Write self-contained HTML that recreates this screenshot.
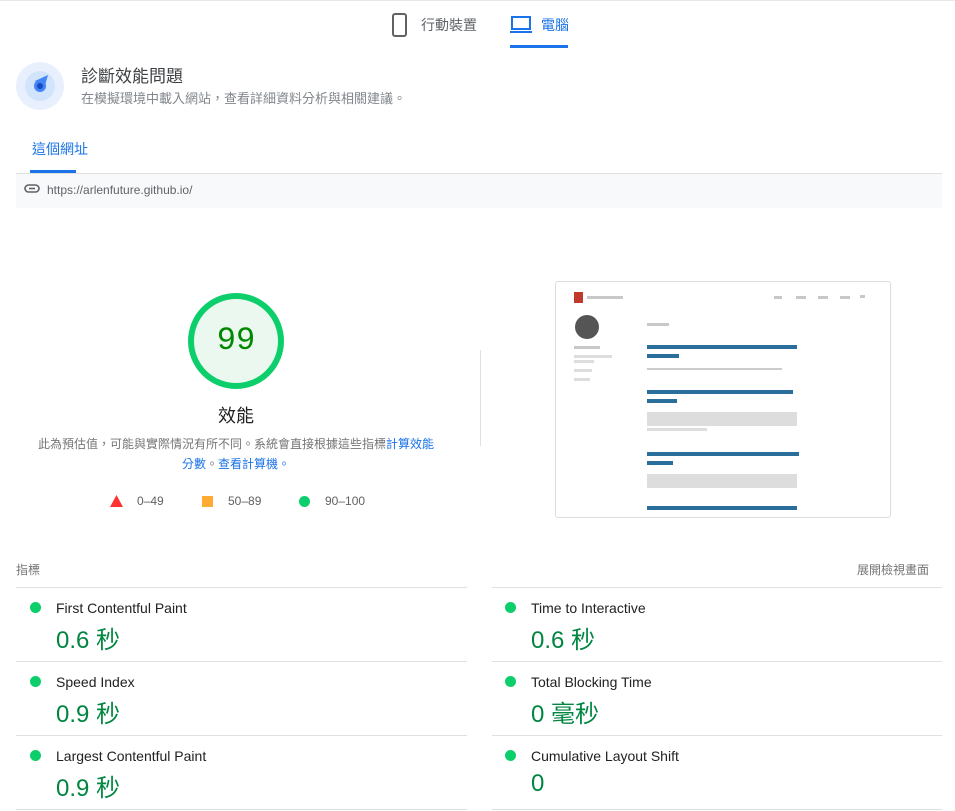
<!DOCTYPE html><html><head><meta charset="utf-8"><style>
body{margin:0;width:955px;height:811px;overflow:hidden;background:#fff;font-family:"Liberation Sans","Noto Sans CJK TC",sans-serif;color:#212121;position:relative}
.a{position:absolute}
.line{position:absolute;height:1px;background:#e0e0e0}
.dot{position:absolute;width:11px;height:11px;border-radius:50%;background:#0cce6b}
.mt{position:absolute;font-size:14px;color:#212121}
.mv{position:absolute;font-size:24px;color:#018642}
.sh{position:absolute;background:#c8c8c8;height:3px}
.lk{position:absolute;background:#2a6e9c;height:4px}
</style></head><body>
<div class="line" style="left:0;top:0;width:955px;background:#e8e8e8"></div>
<svg class="a" style="left:391px;top:13px" width="18" height="24" viewBox="0 0 18 24"><rect x="2" y="1" width="13" height="22" rx="2" fill="none" stroke="#5f6368" stroke-width="2"/></svg>
<div class="a" style="left:421px;top:15px;font-size:14px;color:#5f6368">行動裝置</div>
<svg class="a" style="left:510px;top:16px" width="22" height="18"><rect x="2" y="1" width="18" height="12" fill="none" stroke="#1a73e8" stroke-width="2"/><rect x="0" y="15" width="22" height="2" fill="#1a73e8"/></svg>
<div class="a" style="left:541px;top:15px;font-size:14px;color:#1a73e8">電腦</div>
<div class="a" style="left:510px;top:45px;width:58px;height:3px;background:#1a73e8"></div>
<svg class="a" style="left:15px;top:61px" width="50" height="50"><circle cx="25" cy="25" r="24" fill="#e8f0fe"/><circle cx="25" cy="25" r="15" fill="#d2e3fc"/><path d="M20 20 L33 14 L29 28 Z" fill="#4285f4"/><circle cx="25" cy="25" r="6" fill="#4285f4"/><circle cx="25" cy="25" r="3" fill="#1a47c8"/></svg>
<div class="a" style="left:81px;top:62px;font-size:17px;color:#3c4043">診斷效能問題</div>
<div class="a" style="left:81px;top:88px;font-size:13px;color:#80868b">在模擬環境中載入網站，查看詳細資料分析與相關建議。</div>
<div class="a" style="left:32px;top:139px;font-size:14px;color:#1a73e8">這個網址</div>
<div class="a" style="left:30px;top:170px;width:46px;height:3px;background:#1a73e8"></div>
<div class="line" style="left:16px;top:173px;width:926px"></div>
<div class="a" style="left:16px;top:174px;width:926px;height:34px;background:#f8f9fa"></div>
<svg class="a" style="left:24px;top:184px" width="16" height="10"><rect x="1" y="1" width="14" height="7" rx="3.5" fill="none" stroke="#5f6368" stroke-width="1.6"/><line x1="5" y1="4.5" x2="11" y2="4.5" stroke="#5f6368" stroke-width="1.6"/></svg>
<div class="a" style="left:47px;top:183px;font-size:12px;color:#5f6368">https://arlenfuture.github.io/</div>
<svg class="a" style="left:186px;top:291px" width="100" height="100"><circle cx="50" cy="50" r="45" fill="#eaf8ef" stroke="#0cce6b" stroke-width="6"/></svg>
<div class="a" style="left:186px;top:322px;width:100px;text-align:center;font-size:32px;color:#008800;font-family:'Liberation Mono',monospace">99</div>
<div class="a" style="left:186px;top:402px;width:100px;text-align:center;font-size:18px;color:#212121">效能</div>
<div class="a" style="left:34px;top:434px;width:404px;text-align:center;font-size:12px;line-height:20px;color:#757575">此為預估值，可能與實際情況有所不同。系統會直接根據這些指標<span style="color:#1a73e8">計算效能分數</span>。<span style="color:#1a73e8">查看計算機。</span></div>
<svg class="a" style="left:110px;top:495px" width="13" height="12"><path d="M6.5 0 L13 12 L0 12Z" fill="#ff3333"/></svg>
<div class="a" style="left:137px;top:494px;font-size:12px;color:#616161">0–49</div>
<div class="a" style="left:202px;top:496px;width:11px;height:11px;background:#ffaa33"></div>
<div class="a" style="left:228px;top:494px;font-size:12px;color:#616161">50–89</div>
<div class="dot" style="left:299px;top:496px"></div>
<div class="a" style="left:325px;top:494px;font-size:12px;color:#616161">90–100</div>
<div class="a" style="left:480px;top:350px;width:1px;height:96px;background:#e0e0e0"></div>
<div class="a" style="left:555px;top:281px;width:334px;height:235px;border:1px solid #ddd;border-radius:3px;background:#fff;overflow:hidden">
<div class="a" style="left:18px;top:10px;width:9px;height:11px;background:#c0392b"></div>
<div class="sh" style="left:31px;top:14px;width:36px"></div>
<div class="sh" style="left:218px;top:14px;width:8px"></div><div class="sh" style="left:240px;top:14px;width:10px"></div><div class="sh" style="left:262px;top:14px;width:10px"></div><div class="sh" style="left:284px;top:14px;width:10px"></div><div class="sh" style="left:304px;top:13px;width:5px"></div>
<div class="a" style="left:19px;top:33px;width:24px;height:24px;border-radius:50%;background:#555"></div>
<div class="sh" style="left:18px;top:64px;width:26px"></div><div class="sh" style="left:18px;top:73px;width:38px;background:#ddd"></div><div class="sh" style="left:18px;top:78px;width:20px;background:#ddd"></div>
<div class="sh" style="left:18px;top:87px;width:18px;background:#ddd"></div><div class="sh" style="left:18px;top:96px;width:16px;background:#ddd"></div>
<div class="sh" style="left:91px;top:41px;width:22px"></div>
<div class="lk" style="left:91px;top:63px;width:150px"></div><div class="lk" style="left:91px;top:72px;width:32px"></div>
<div class="sh" style="left:91px;top:86px;width:135px;background:#ccc;height:2px"></div>
<div class="lk" style="left:91px;top:108px;width:146px"></div><div class="lk" style="left:91px;top:117px;width:30px"></div>
<div class="sh" style="left:91px;top:130px;width:150px;background:#ddd;height:14px"></div><div class="sh" style="left:91px;top:146px;width:60px;background:#ddd;height:3px"></div>
<div class="lk" style="left:91px;top:170px;width:152px"></div><div class="lk" style="left:91px;top:179px;width:26px"></div>
<div class="sh" style="left:91px;top:192px;width:150px;background:#ddd;height:14px"></div>
<div class="lk" style="left:91px;top:224px;width:150px"></div>
</div>
<div class="a" style="left:16px;top:561px;font-size:12px;color:#757575">指標</div>
<div class="a" style="left:857px;top:561px;font-size:12px;color:#757575">展開檢視畫面</div>
<div class="line" style="left:16px;top:587px;width:451px"></div><div class="line" style="left:492px;top:587px;width:450px"></div>
<div class="line" style="left:16px;top:661px;width:451px"></div><div class="line" style="left:492px;top:661px;width:450px"></div>
<div class="line" style="left:16px;top:735px;width:451px"></div><div class="line" style="left:492px;top:735px;width:450px"></div>
<div class="line" style="left:16px;top:809px;width:451px"></div><div class="line" style="left:492px;top:809px;width:450px"></div>
<div class="dot" style="left:30px;top:602px"></div><div class="mt" style="left:56px;top:600px">First Contentful Paint</div><div class="mv" style="left:56px;top:620px">0.6 秒</div>
<div class="dot" style="left:30px;top:676px"></div><div class="mt" style="left:56px;top:674px">Speed Index</div><div class="mv" style="left:56px;top:694px">0.9 秒</div>
<div class="dot" style="left:30px;top:750px"></div><div class="mt" style="left:56px;top:748px">Largest Contentful Paint</div><div class="mv" style="left:56px;top:768px">0.9 秒</div>
<div class="dot" style="left:505px;top:602px"></div><div class="mt" style="left:531px;top:600px">Time to Interactive</div><div class="mv" style="left:531px;top:620px">0.6 秒</div>
<div class="dot" style="left:505px;top:676px"></div><div class="mt" style="left:531px;top:674px">Total Blocking Time</div><div class="mv" style="left:531px;top:694px">0 毫秒</div>
<div class="dot" style="left:505px;top:750px"></div><div class="mt" style="left:531px;top:748px">Cumulative Layout Shift</div><div class="mv" style="left:531px;top:770px">0</div>
</body></html>
